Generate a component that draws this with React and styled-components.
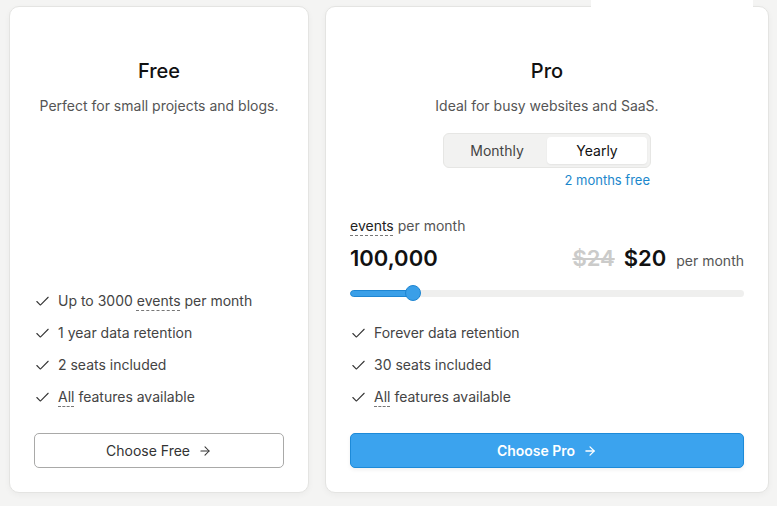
import { useState } from "react";
import styled, { createGlobalStyle } from "styled-components";
import { Check, ArrowRight } from "lucide-react";

const GlobalStyle = createGlobalStyle`
    *, *::before, *::after {
        box-sizing: border-box;
    }

    body {
        margin: 0;
        background: #f4f4f3;
        font-family: Inter, "Noto Sans", sans-serif;
        color: #111;
        -webkit-font-smoothing: antialiased;
    }
`;

const FeatureList = ({ items }) => (
    <Features>
        {items.map((item, i) => (
            <Feature key={i}>
                <Check size={17} strokeWidth={1.5} />
                <span>{item}</span>
            </Feature>
        ))}
    </Features>
);

const App = () => {
    const [billing, setBilling] = useState("yearly");
    const fill = 16;

    const freeFeatures = [
        <>Up to 3000 <Term>events</Term> per month</>,
        "1 year data retention",
        "2 seats included",
        <><Term>All</Term> features available</>,
    ];

    const proFeatures = [
        "Forever data retention",
        "30 seats included",
        <><Term>All</Term> features available</>,
    ];

    return (
        <>
            <GlobalStyle />
            <Page>
                <Card $width={300}>
                    <Title>Free</Title>
                    <Subtitle>Perfect for small projects and blogs.</Subtitle>

                    <FeatureList items={freeFeatures} />

                    <OutlineButton>
                        Choose Free
                        <ArrowRight size={14} strokeWidth={1.8} />
                    </OutlineButton>
                </Card>

                <Card $width={444}>
                    <Tab />
                    <Title>Pro</Title>
                    <Subtitle>Ideal for busy websites and SaaS.</Subtitle>

                    <BillingGroup>
                        <Toggle>
                            <Segment
                                $active={billing === "monthly"}
                                onClick={() => setBilling("monthly")}
                            >
                                Monthly
                            </Segment>
                            <Segment
                                $active={billing === "yearly"}
                                onClick={() => setBilling("yearly")}
                            >
                                Yearly
                            </Segment>
                        </Toggle>
                        <Note>2 months free</Note>
                    </BillingGroup>

                    <Usage>
                        <Label>
                            <Term $dark>events</Term> per month
                        </Label>
                        <PriceRow>
                            <Amount>100,000</Amount>
                            <Prices>
                                <OldPrice>$24</OldPrice>
                                <Amount>$20</Amount>
                                <Per>per month</Per>
                            </Prices>
                        </PriceRow>
                        <Slider>
                            <Track>
                                <Fill style={{ width: `${fill}%` }} />
                            </Track>
                            <Thumb style={{ left: `${fill}%` }} />
                        </Slider>
                    </Usage>

                    <FeatureList items={proFeatures} />

                    <PrimaryButton>
                        Choose Pro
                        <ArrowRight size={14} strokeWidth={2.2} />
                    </PrimaryButton>
                </Card>
            </Page>
        </>
    );
};

export default App;

const Page = styled.div`
    display: flex;
    gap: 16px;
    padding: 6px 9px 13px;
    height: 506px;
    overflow: hidden;
`;

const Card = styled.div`
    position: relative;
    width: ${p => p.$width}px;
    flex-shrink: 0;
    display: flex;
    flex-direction: column;
    padding: 52px 24px 24px;
    background: #fff;
    border: 1px solid #e4e4e2;
    border-radius: 10px;
    box-shadow: 0 2px 6px rgba(0, 0, 0, 0.04);
`;

const Tab = styled.div`
    position: absolute;
    top: -7px;
    left: 265px;
    width: 162px;
    height: 8px;
    background: #fff;
`;

const Title = styled.h2`
    margin: 0;
    font-size: 20px;
    line-height: 24px;
    font-weight: 500;
    text-align: center;
    color: #111;
`;

const Subtitle = styled.p`
    margin: 13px 0 0;
    font-size: 14px;
    line-height: 20px;
    text-align: center;
    color: #555;
`;

const BillingGroup = styled.div`
    align-self: center;
    display: flex;
    flex-direction: column;
    align-items: flex-end;
    margin-top: 17px;
`;

const Toggle = styled.div`
    display: flex;
    padding: 3px;
    background: #f2f2f1;
    border: 1px solid #e6e6e4;
    border-radius: 6px;
`;

const Segment = styled.button`
    width: 100px;
    height: 27px;
    border: none;
    border-radius: 4px;
    font-family: inherit;
    font-size: 14px;
    cursor: pointer;
    background: ${p => (p.$active ? "#fff" : "transparent")};
    color: ${p => (p.$active ? "#111" : "#444")};
    box-shadow: ${p => (p.$active ? "0 1px 2px rgba(0, 0, 0, 0.06)" : "none")};
`;

const Note = styled.span`
    margin-top: 4px;
    margin-right: 1px;
    font-size: 13px;
    line-height: 16px;
    color: #1b87cc;
`;

const Usage = styled.div`
    margin-top: 28px;
    margin-bottom: 22px;
`;

const Label = styled.div`
    font-size: 14px;
    line-height: 20px;
    color: #555;
`;

const Term = styled.span`
    color: ${p => (p.$dark ? "#222" : "inherit")};
    text-decoration: underline dashed #777;
    text-decoration-thickness: 1px;
    text-underline-offset: 4px;
`;

const PriceRow = styled.div`
    display: flex;
    align-items: baseline;
    justify-content: space-between;
    margin-top: 8px;
`;

const Prices = styled.div`
    display: flex;
    align-items: baseline;
    gap: 9px;
`;

const Amount = styled.span`
    font-size: 22px;
    line-height: 28px;
    font-weight: 600;
    color: #111;
`;

const OldPrice = styled(Amount)`
    color: #cbcbca;
    text-decoration: line-through;
    text-decoration-thickness: 2px;
`;

const Per = styled.span`
    margin-left: 1px;
    font-size: 14px;
    color: #555;
`;

const Slider = styled.div`
    position: relative;
    height: 16px;
    margin-top: 13px;
    display: flex;
    align-items: center;
`;

const Track = styled.div`
    width: 100%;
    height: 7px;
    border-radius: 4px;
    background: #efefee;
    overflow: hidden;
`;

const Fill = styled.div`
    height: 100%;
    background: #3a9fe8;
    border: 1px solid #1f86d2;
    border-radius: 4px;
`;

const Thumb = styled.div`
    position: absolute;
    top: 0;
    width: 16px;
    height: 16px;
    margin-left: -8px;
    border-radius: 50%;
    background: #3a9fe8;
    border: 1px solid #1f86d2;
`;

const Features = styled.ul`
    list-style: none;
    margin: auto 0 0;
    padding: 0;
    display: flex;
    flex-direction: column;
    gap: 12px;
`;

const Feature = styled.li`
    display: flex;
    align-items: center;
    gap: 7px;
    font-size: 14px;
    line-height: 20px;
    color: #444;

    svg {
        flex-shrink: 0;
        color: #333;
    }
`;

const OutlineButton = styled.button`
    margin-top: 26px;
    height: 35px;
    display: flex;
    align-items: center;
    justify-content: center;
    gap: 8px;
    background: #fff;
    border: 1px solid #a9a9a8;
    border-radius: 5px;
    font-family: inherit;
    font-size: 14px;
    color: #333;
    cursor: pointer;
`;

const PrimaryButton = styled(OutlineButton)`
    background: #3ba3ee;
    border-color: #1d8ad8;
    color: #fff;
    font-weight: 600;
    box-shadow: 0 2px 4px rgba(0, 0, 0, 0.06);
`;
